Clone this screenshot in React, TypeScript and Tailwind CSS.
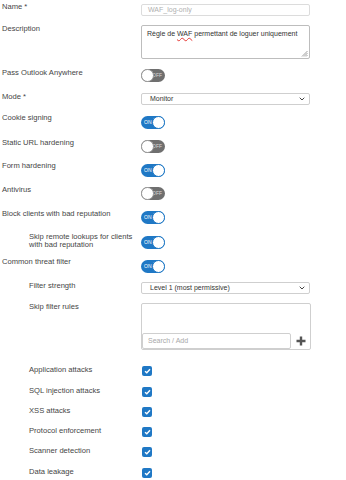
import React from "react";

const font = { fontFamily: '"Liberation Sans", Arial, sans-serif' };

function Toggle({ on }: { on: boolean }) {
  if (on) {
    return (
      <div className="relative w-[24px] h-[13px] rounded-full bg-[#1f78c5] flex items-center">
        <span className="absolute left-[3px] top-[3px] text-[5px] leading-[7px] text-white">ON</span>
        <span className="absolute right-0 top-0 w-[13px] h-[13px] rounded-full bg-white border border-[#1f78c5]" />
      </div>
    );
  }
  return (
    <div className="relative w-[24px] h-[13px] rounded-full bg-[#6f6f6f] flex items-center">
      <span className="absolute right-[3px] top-[3px] text-[5px] leading-[7px] text-[#d8d8d8]">OFF</span>
      <span className="absolute left-0 top-0 w-[13px] h-[13px] rounded-full bg-white border border-[#9a9a9a]" />
    </div>
  );
}

function Check() {
  return (
    <div className="ml-[1px] w-[10px] h-[10px] rounded-[2px] bg-[#1f78c5] flex items-center justify-center">
      <svg width="7" height="6" viewBox="0 0 7 6">
        <path d="M1 3.2 L2.8 4.8 L6 1.2" stroke="white" strokeWidth="1.4" fill="none" />
      </svg>
    </div>
  );
}

function Row({
  h,
  label,
  indent,
  mt,
  children,
}: {
  h: number;
  label: React.ReactNode;
  indent?: boolean;
  mt: number;
  children?: React.ReactNode;
}) {
  return (
    <div className="flex" style={{ height: h }}>
      <div className={`w-[141px] shrink-0 ${indent ? "pl-[29px]" : "pl-[2px]"} text-[7.6px] leading-[10px] text-[#454545]`}>
        {label}
      </div>
      <div style={{ marginTop: mt }}>{children}</div>
    </div>
  );
}

function Select({ text }: { text: string }) {
  return (
    <div className="w-[169px] h-[12px] border border-[#cfcfcf] rounded-[2px] flex items-center justify-between pl-[8px] pr-[4px] text-[7px] text-[#333]">
      <span>{text}</span>
      <svg width="6" height="4" viewBox="0 0 6 4">
        <path d="M0.7 0.7 L3 3 L5.3 0.7" stroke="#444" strokeWidth="1" fill="none" />
      </svg>
    </div>
  );
}

export default function App() {
  return (
    <div className="w-[346px] h-[480px] bg-white overflow-hidden pt-[2px]" style={font}>
      <Row h={22} label="Name *" mt={2}>
        <div className="w-[169px] h-[12px] border border-[#dcdcdc] rounded-[2px] flex items-center pl-[6px] text-[7px] text-[#b0b0b0]">
          WAF_log-only
        </div>
      </Row>
      <Row h={44} label="Description" mt={1}>
        <div className="relative w-[169px] h-[34px] border border-[#bdbdbd] rounded-[2px] pl-[5px] pt-[3px] text-[7px] leading-[9px] text-[#333]">
          Règle de{" "}
          <span className="underline decoration-wavy decoration-[#e53935] decoration-[0.6px]">WAF</span>{" "}
          permettant de loguer uniquement
          <svg className="absolute right-[1px] bottom-[1px]" width="7" height="7" viewBox="0 0 7 7">
            <path d="M6.5 1 L1 6.5 M6.5 3 L3 6.5 M6.5 5 L5 6.5" stroke="#777" strokeWidth="0.7" />
          </svg>
        </div>
      </Row>
      <Row h={24} label="Pass Outlook Anywhere" mt={1}>
        <Toggle on={false} />
      </Row>
      <Row h={21} label="Mode *" mt={1}>
        <Select text="Monitor" />
      </Row>
      <Row h={25} label="Cookie signing" mt={3}>
        <Toggle on />
      </Row>
      <Row h={23} label="Static URL hardening" mt={2}>
        <Toggle on={false} />
      </Row>
      <Row h={24} label="Form hardening" mt={3}>
        <Toggle on />
      </Row>
      <Row h={24} label="Antivirus" mt={2}>
        <Toggle on={false} />
      </Row>
      <Row h={24} label="Block clients with bad reputation" mt={2}>
        <Toggle on />
      </Row>
      <Row
        h={24}
        indent
        mt={3}
        label={
          <div className="leading-[8px]">
            Skip remote lookups for clients
            <br />
            with bad reputation
          </div>
        }
      >
        <Toggle on />
      </Row>
      <Row h={24} label="Common threat filter" mt={3}>
        <Toggle on />
      </Row>
      <Row h={21} indent label="Filter strength" mt={1}>
        <Select text="Level 1 (most permissive)" />
      </Row>
      <Row h={63} indent label="Skip filter rules" mt={1}>
        <div className="w-[170px] h-[47px] border border-[#cfcfcf] rounded-[2px] flex flex-col justify-end">
          <div className="flex items-center">
            <div className="w-[149px] h-[16px] border border-[#cfcfcf] rounded-[2px] flex items-center pl-[5px] text-[7px] text-[#a8a8a8] bg-white">
              Search / Add
            </div>
            <div className="flex-1 flex items-center justify-center">
              <svg width="10" height="10" viewBox="0 0 10 10">
                <path d="M5 0.5 V9.5 M0.5 5 H9.5" stroke="#555" strokeWidth="2.4" />
              </svg>
            </div>
          </div>
        </div>
      </Row>
      <Row h={21} indent label="Application attacks" mt={1}>
        <Check />
      </Row>
      <Row h={20} indent label="SQL injection attacks" mt={1}>
        <Check />
      </Row>
      <Row h={20} indent label="XSS attacks" mt={1}>
        <Check />
      </Row>
      <Row h={20} indent label="Protocol enforcement" mt={1}>
        <Check />
      </Row>
      <Row h={21} indent label="Scanner detection" mt={1}>
        <Check />
      </Row>
      <Row h={20} indent label="Data leakage" mt={1}>
        <Check />
      </Row>
    </div>
  );
}
